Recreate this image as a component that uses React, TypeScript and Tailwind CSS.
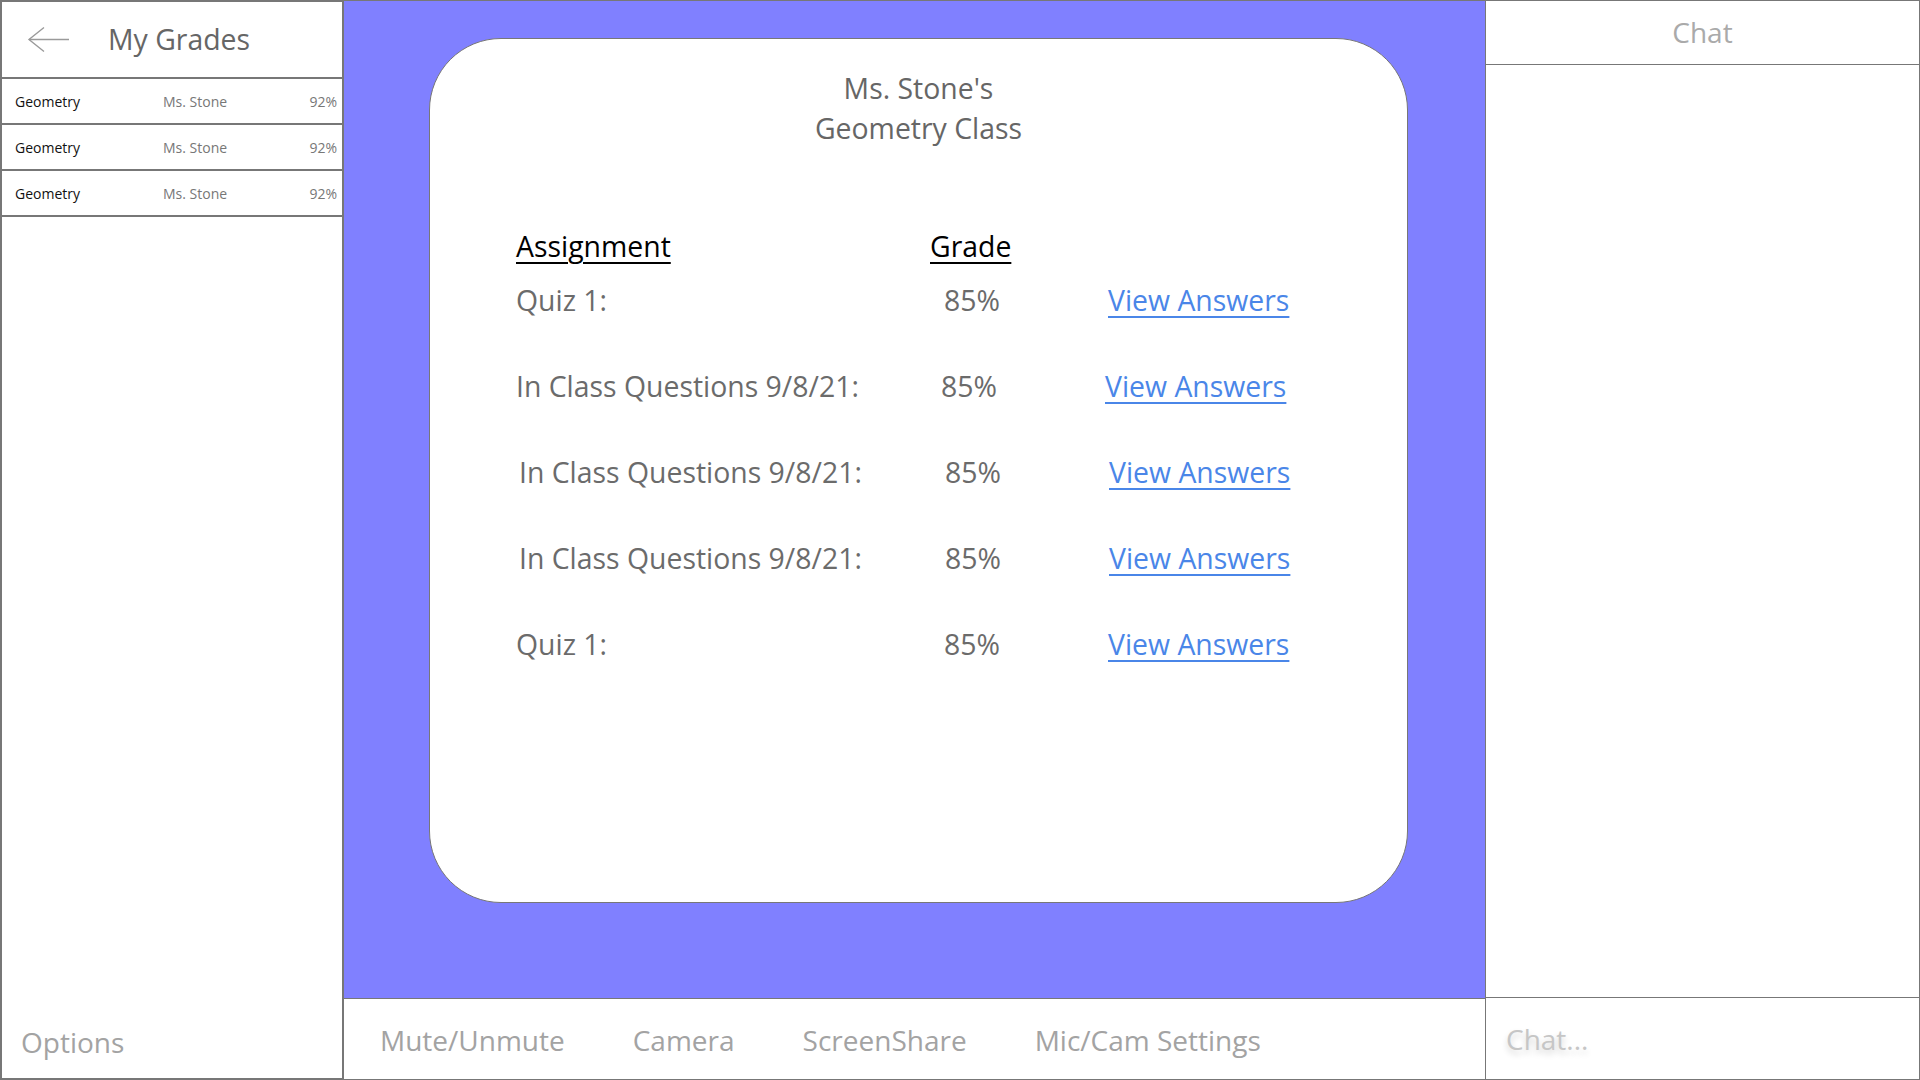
import { ReactNode } from 'react';

const classes = [
  { subject: 'Geometry', teacher: 'Ms. Stone', grade: '92%' },
  { subject: 'Geometry', teacher: 'Ms. Stone', grade: '92%' },
  { subject: 'Geometry', teacher: 'Ms. Stone', grade: '92%' },
];

// the rows in the mockup are hand-placed, so each one drifts a little
const assignments = [
  { name: 'Quiz 1:', lead: 'pl-0', nameCol: 'w-[428px]', gradeCol: 'w-[164px]' },
  { name: 'In Class Questions 9/8/21:', lead: 'pl-0', nameCol: 'w-[425px]', gradeCol: 'w-[164px]' },
  { name: 'In Class Questions 9/8/21:', lead: 'pl-[3px]', nameCol: 'w-[426px]', gradeCol: 'w-[164px]' },
  { name: 'In Class Questions 9/8/21:', lead: 'pl-[3px]', nameCol: 'w-[426px]', gradeCol: 'w-[164px]' },
  { name: 'Quiz 1:', lead: 'pl-0', nameCol: 'w-[428px]', gradeCol: 'w-[164px]' },
];

function BackArrow() {
  return (
    <svg width="44" height="28" viewBox="0 0 44 28" fill="none" className="text-[#9a9a9a]">
      <path d="M2 13.5H42" stroke="currentColor" strokeWidth="1.4" />
      <path d="M17 1.5L2 13.5L17 25.5" stroke="currentColor" strokeWidth="1.4" />
    </svg>
  );
}

function ToolbarButton({ children }: { children: ReactNode }) {
  return <button className="text-[28px] text-[#a3a3a3] leading-none">{children}</button>;
}

export default function App() {
  return (
    <div
      className="flex h-screen w-full overflow-hidden bg-white"
      style={{ fontFamily: '"Open Sans", "Noto Sans", sans-serif' }}
    >
      {/* left: grades list */}
      <aside className="flex w-[344px] shrink-0 flex-col border-2 border-[#777]">
        <div className="flex h-[77px] items-center border-b-2 border-[#777] pl-[25px]">
          <BackArrow />
          <h1 className="ml-[37px] text-[28.4px] text-[#666] leading-none">My Grades</h1>
        </div>
        {classes.map((c, i) => (
          <div key={i} className="flex h-[46px] items-center border-b-2 border-[#777] pl-[13px] pr-[5px] text-[14px]">
            <span className="w-[148px] text-[#111]">{c.subject}</span>
            <span className="text-[#777]">{c.teacher}</span>
            <span className="ml-auto text-[#777]">{c.grade}</span>
          </div>
        ))}
        <div className="flex-1" />
        <div className="flex h-[80px] items-center pl-[19px] pt-[8px]">
          <span className="text-[28px] text-[#a3a3a3] leading-none">Options</span>
        </div>
      </aside>

      {/* center: class view + call controls */}
      <main className="flex flex-1 flex-col border-t border-[#777]">
        <div className="flex flex-1 bg-[#8080ff] pl-[85px] pt-[37px] pb-[95px]">
          <div className="w-[979px] rounded-[72px] border border-[#777] bg-white pt-[29px]">
            <div className="text-center text-[28.4px] leading-[40px] text-[#666]">
              <p>Ms. Stone's</p>
              <p>Geometry Class</p>
            </div>

            <div className="mt-[78px] pl-[86px]">
              <div className="flex h-[40px] items-center text-[28.4px] text-black">
                <span className="w-[414px] underline underline-offset-[5px] decoration-[2px]">Assignment</span>
                <span className="underline underline-offset-[5px] decoration-[2px]">Grade</span>
              </div>
              <div className="mt-[14px] flex flex-col gap-[46px]">
                {assignments.map((a, i) => (
                  <div key={i} className={`flex h-[40px] items-center text-[28.4px] text-[#6b6b6b] ${a.lead}`}>
                    <span className={a.nameCol}>{a.name}</span>
                    <span className={a.gradeCol}>85%</span>
                    <a href="#" className="text-[#4a86e8] underline underline-offset-[5px] decoration-[2px]">
                      View Answers
                    </a>
                  </div>
                ))}
              </div>
            </div>
          </div>
        </div>
        <div className="flex h-[82px] items-center gap-[68px] border-t border-b border-[#777] pl-[36px] pt-[2px]">
          <ToolbarButton>Mute/Unmute</ToolbarButton>
          <ToolbarButton>Camera</ToolbarButton>
          <ToolbarButton>ScreenShare</ToolbarButton>
          <ToolbarButton>Mic/Cam Settings</ToolbarButton>
        </div>
      </main>

      {/* right: chat */}
      <aside className="flex w-[435px] shrink-0 flex-col border border-[#777]">
        <div className="flex h-[64px] items-center justify-center border-b border-[#777] pb-[2px]">
          <span className="text-[28px] text-[#aaa] leading-none">Chat</span>
        </div>
        <div className="flex-1" />
        <div className="flex h-[82px] items-center border-t border-[#777] pl-[20px]">
          <span
            className="text-[28px] text-[#c6c6c6] leading-none"
            style={{ textShadow: '0 4px 6px rgba(0,0,0,0.18)' }}
          >
            Chat...
          </span>
        </div>
      </aside>
    </div>
  );
}
